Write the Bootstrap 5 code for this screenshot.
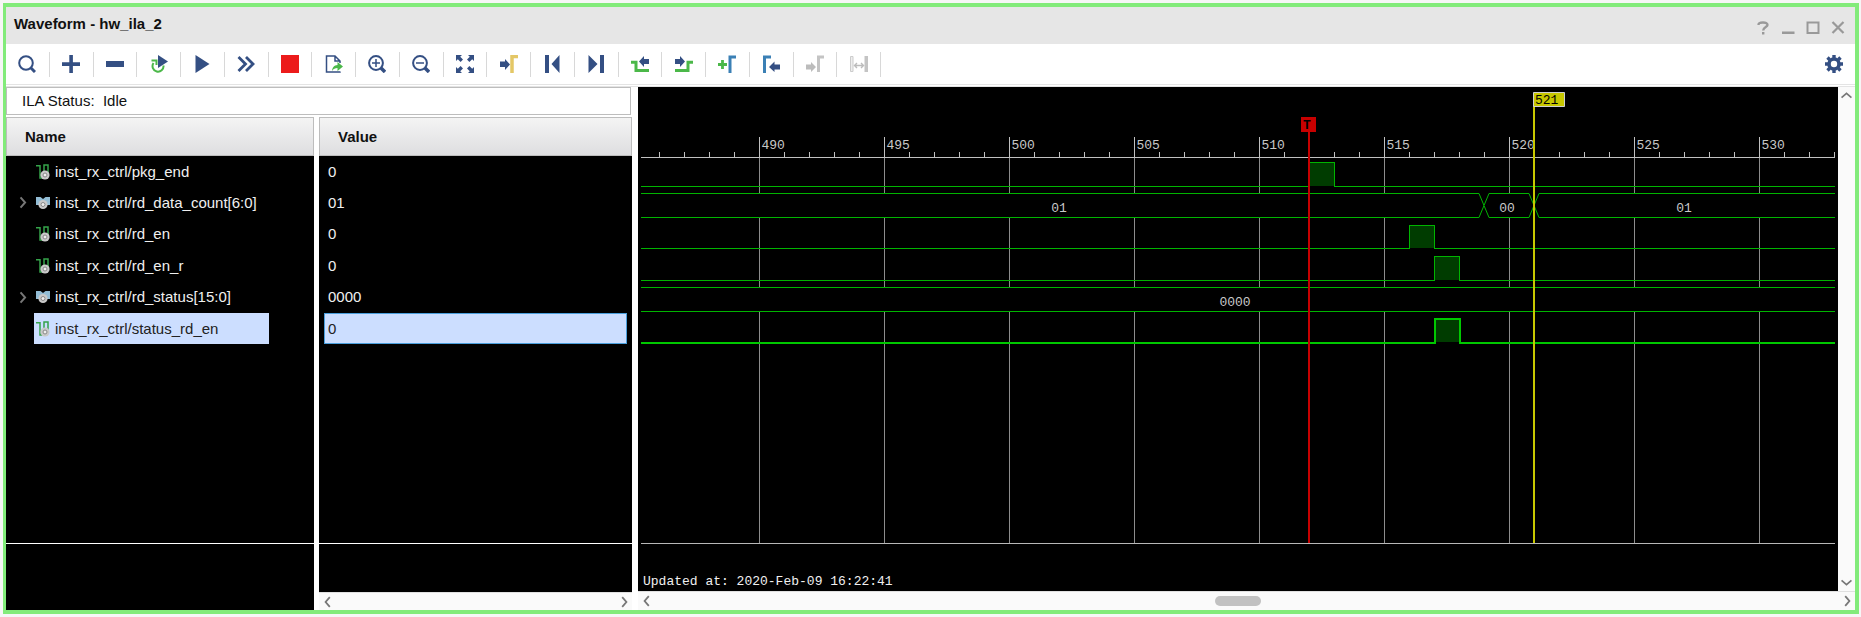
<!DOCTYPE html>
<html lang="en">
<head>
<meta charset="utf-8">
<meta name="viewport" content="width=device-width, initial-scale=1">
<title>Waveform - hw_ila_2</title>
<link href="https://cdn.jsdelivr.net/npm/bootstrap@5.3.0/dist/css/bootstrap.min.css" rel="stylesheet">
<style>
  :root { --navy: #344f83; --frame: #82eb7a; --leaf: #4bb849; }
  body { font-family: "Liberation Sans", Arial, sans-serif; font-size: 15px; line-height: 20px; color: #111; background: #f6f6f6; }
  .wave-window { margin: 3px 2px 3px 3px; border: 4px solid var(--frame); border-left-width: 3px; background: #fff; }
  .title-strip { height: 37px; background: #e6e6e6; padding: 0 5px 4px 8px; }
  .title-strip h1 { font-size: 15px; line-height: 20px; font-weight: 700; }
  .plain-btn { border: 0; padding: 0; background: none; display: flex; align-items: center; justify-content: center; }
  .plain-btn svg { display: block; }
  .win-btn { width: 25px; height: 20px; }
  .tool-strip { height: 43px; border-bottom: 3px solid #e4e4e4; border-bottom-style: double; }
  .tool-grid { display: grid; grid-template-columns: repeat(20, 1fr); width: 875px; height: 25px; }
  .tool-grid .plain-btn { border-right: 1px solid #d8d8d8; }
  .panes { display: grid; grid-template-columns: minmax(0, 626fr) minmax(0, 1217fr); gap: 6px; }
  .lists { display: grid; grid-template-columns: minmax(0, 308fr) minmax(0, 313fr); gap: 5px; }
  .status-line { height: 28px; border: 1px solid #bdbdbd; padding: 0 15px; margin: 0 1px 2px 0; }
  .black-pane { background: #000; color: #f0f0f0; }
  .sig-table { width: 100%; border-collapse: separate; border-spacing: 0; table-layout: fixed; }
  .sig-table th { height: 39px; padding: 0 18px; color: #111; background: linear-gradient(#f4f4f4, #dedee0); border: 1px solid #bdbdbd; font-weight: 700; }
  .sig-table td { height: 31px; padding: 0; white-space: nowrap; }
  .sig-table tr:nth-child(3) td, .sig-table tr:nth-child(5) td { height: 32px; }
  .twist { width: 28px; height: 31px; flex: none; }
  .sig-name { height: 31px; padding: 0 2px; gap: 5px; }
  .sig-name svg { flex: none; }
  .sig-value { height: 31px; margin: 0 5px; padding: 0 3px; display: flex; align-items: center; border: 1px solid transparent; }
  .picked { background: #ccdeff; color: #222; }
  .sig-name.picked { width: 235px; }
  .sig-value.picked { border-color: #4a9fdc; }
  .foot { border-top: 1px solid #fff; }
  .foot-name { height: 67px; }
  .foot-value { height: 49px; }
  .foot-wave { height: 48px; border-color: #b8b8b8; margin: 0 3px; padding: 30px 2px 0; }
  .bar-x { height: 18px; background: #fafafa; border-top: 1px solid #e0e0e0; }
  .bar-x .plain-btn, .bar-y .plain-btn { width: 17px; height: 17px; }
  .bar-y { background: #fafafa; width: 17px; }
  .bar-x.wide { height: 19px; }
  .thumb-track { display: grid; grid-template-columns: 560fr 46px 577fr; align-items: center; }
  .thumb { height: 10px; border-radius: 5px; background: #c1c1c1; }
  .plot-wrap { padding: 0 3px; min-height: 260px; }
  .plot { width: 100%; flex: 1 1 0; min-height: 0; display: block; overflow: hidden; }
  .mono, .plot text { font-family: "Liberation Mono", "Courier New", monospace; font-size: 13px; line-height: 16px; }
  .plot text { fill: #c8c8c8; }
  .plot .axis { stroke: #c0c0c0; }
  .plot .gridline { stroke: #8c8c8c; }
  .plot .trace { stroke: #00b400; fill: none; }
  .plot .trace.chosen { stroke: #00c800; stroke-width: 2; }
  .plot .high { fill: #003c00; }
  .plot .bus { fill: #000; }
  .plot .flag-text { fill: #000; }
</style>
</head>
<body class="vh-100 d-flex flex-column">

<svg class="d-none" aria-hidden="true">
  <symbol id="bit" viewBox="0 0 14 16">
    <path d="M0 1.800H4V14H6.500M8 9V1h4v8" fill="none" stroke="#35a34a" stroke-width="1.500"/>
    <circle cx="9" cy="11" r="4.600" fill="#c9c9c9"/><circle cx="9" cy="11" r="2" fill="#eee" stroke="#888" stroke-width="1"/>
  </symbol>
  <symbol id="bus" viewBox="0 0 14 16">
    <path d="M0 2h4.500L7 4l2.500-2H14v8h-3L7 8l-4 2H0z" fill="#93bdd5"/>
    <circle cx="7" cy="9.500" r="4.600" fill="#c9c9c9"/><circle cx="7" cy="9.500" r="2" fill="#eee" stroke="#888" stroke-width="1"/>
  </symbol>
  <symbol id="left" viewBox="0 0 10 10"><path d="M6.500 1 3 5l3.500 4" fill="none" stroke="#777" stroke-width="1.500"/></symbol>
  <symbol id="right" viewBox="0 0 10 10"><path d="M3.500 1 7 5 3.500 9" fill="none" stroke="#777" stroke-width="1.500"/></symbol>
  <symbol id="up" viewBox="0 0 10 10"><path d="M.500 7 5 3l4.500 4" fill="none" stroke="#777" stroke-width="1.500"/></symbol>
  <symbol id="down" viewBox="0 0 10 10"><path d="M.500 3 5 7l4.500-4" fill="none" stroke="#777" stroke-width="1.500"/></symbol>
</svg>

<main class="wave-window d-flex flex-column flex-grow-1">
  <header class="title-strip d-flex align-items-center justify-content-between">
    <h1 class="m-0">Waveform - hw_ila_2</h1>
    <div class="d-flex pt-2">
      <button class="plain-btn win-btn" aria-label="Help"><svg width="14" height="14" fill="none" stroke="#999" stroke-width="2.400"><path d="M2.500 4C2.500 2 4.500 1.500 7 1.500s4.500.500 4.500 2.500S7.200 6.200 7.200 9.500M7.200 11v2.500"/></svg></button>
      <button class="plain-btn win-btn" aria-label="Minimize"><svg width="14" height="14"><path d="M1 10.500h12.500V13H1z" fill="#999"/></svg></button>
      <button class="plain-btn win-btn" aria-label="Maximize"><svg width="14" height="14"><path d="M1.500 1.500h11v10.500h-11z" fill="none" stroke="#999" stroke-width="2"/></svg></button>
      <button class="plain-btn win-btn" aria-label="Close"><svg width="14" height="14"><path d="M1.500 1l11 11m0-11l-11 11" stroke="#999" stroke-width="2.200"/></svg></button>
    </div>
  </header>

  <div class="tool-strip d-flex align-items-center justify-content-between pe-2" role="toolbar" aria-label="Waveform tools">
    <div class="tool-grid">
      <button class="plain-btn" aria-label="Search"><svg width="18" height="18" fill="none" stroke="#344f83"><circle cx="8" cy="8" r="6.800" stroke-width="2"/><path d="M13 13l4 4" stroke-width="3"/></svg></button>
      <button class="plain-btn" aria-label="Add"><svg width="18" height="18"><path d="M7.300 0h3.600v7.300H18v3.600h-7.100V18H7.300v-7.100H0V7.300h7.300z" fill="#344f83"/></svg></button>
      <button class="plain-btn" aria-label="Remove"><svg width="18" height="18"><path d="M0 6h18v6H0z" fill="#344f83"/></svg></button>
      <button class="plain-btn" aria-label="Auto re-trigger"><svg width="18" height="18"><path d="M1.500 5.500h5v4.500M3.500 8a5.500 5.500 0 1 0 10 2.500" fill="none" stroke="#4bb849" stroke-width="2"/><path d="M8 0l10 6.500L8 13z" fill="#344f83"/></svg></button>
      <button class="plain-btn" aria-label="Run trigger"><svg width="18" height="18"><path d="M2.500 0 16.500 9l-14 9z" fill="#344f83"/></svg></button>
      <button class="plain-btn" aria-label="Run immediate"><svg width="18" height="18"><path d="M1.500 2l7 7-7 7M9 2l7 7-7 7" fill="none" stroke="#344f83" stroke-width="2.800"/></svg></button>
      <button class="plain-btn" aria-label="Stop"><svg width="18" height="18"><path d="M0 0h18v18H0z" fill="#ec1b1b"/></svg></button>
      <button class="plain-btn" aria-label="Export"><svg width="18" height="18"><path d="M15 16.500V17H1.500V1H10l5 5v2M10 1v5h5" fill="none" stroke="#344f83" stroke-width="1.500"/><path d="M7 16c.500-4 2-5.500 5.500-6V7l5.500 4.500-5.500 4.500v-3c-2.500 0-4 .800-5.500 3z" fill="#4bb849"/></svg></button>
      <button class="plain-btn" aria-label="Zoom in"><svg width="18" height="18" fill="none" stroke="#344f83"><circle cx="8" cy="8" r="6.900" stroke-width="2"/><path d="M13 13l4 4" stroke-width="3.500"/><path d="M4 8h8M8 4v8" stroke-width="1.500"/></svg></button>
      <button class="plain-btn" aria-label="Zoom out"><svg width="18" height="18" fill="none" stroke="#344f83"><circle cx="8" cy="8" r="6.900" stroke-width="2"/><path d="M13 13l4 4" stroke-width="3.500"/><path d="M4 8h8" stroke-width="1.500"/></svg></button>
      <button class="plain-btn" aria-label="Zoom fit"><svg width="18" height="18"><path d="M0 0h6L4.200 1.800 7 4.600 4.600 7 1.800 4.200 0 6zM18 0v6l-1.800-1.800L13.400 7 11 4.600l2.800-2.800L12 0zM0 18v-6l1.800 1.800L4.600 11 7 13.400l-2.800 2.800L6 18zM18 18h-6l1.800-1.800L11 13.400l2.400-2.400 2.800 2.800L18 12z" fill="#344f83"/></svg></button>
      <button class="plain-btn" aria-label="Go to cursor"><svg width="18" height="18"><path d="M0 6.500h5V4l5 5.500L5 15v-3H0z" fill="#344f83"/><path d="M12 18V1.500h6" fill="none" stroke="#e4c766" stroke-width="3.500"/></svg></button>
      <button class="plain-btn" aria-label="Go to start"><svg width="18" height="18"><path d="M2 0h4v18H2zM16.500 0v18L8.500 9z" fill="#344f83"/></svg></button>
      <button class="plain-btn" aria-label="Go to end"><svg width="18" height="18"><path d="M13 0h4v18h-4zM1.500 0v18l9-9z" fill="#344f83"/></svg></button>
      <button class="plain-btn" aria-label="Previous transition"><svg width="18" height="18"><path d="M0 7.200h5v8.300h13" fill="none" stroke="#4bb849" stroke-width="3"/><path d="M8 6.500 13 1v3h5v5h-5v3z" fill="#344f83"/></svg></button>
      <button class="plain-btn" aria-label="Next transition"><svg width="18" height="18"><path d="M18 7.200h-5v8.300H0" fill="none" stroke="#4bb849" stroke-width="3"/><path d="M10 6.500 5 1v3H0v5h5v3z" fill="#344f83"/></svg></button>
      <button class="plain-btn" aria-label="Add marker"><svg width="18" height="18"><path d="M0 9.500h9M4.500 5v9" stroke="#4bb849" stroke-width="2.800"/><path d="M12 18V2h6" fill="none" stroke="#3b80b5" stroke-width="3"/></svg></button>
      <button class="plain-btn" aria-label="Previous marker"><svg width="18" height="18"><path d="M2.500 18V2H9" fill="none" stroke="#3b80b5" stroke-width="3"/><path d="M7 12l5.500-5.500V9.500H18v5h-5.500V17z" fill="#344f83"/></svg></button>
      <button class="plain-btn" aria-label="Next marker" aria-disabled="true"><svg width="18" height="18"><path d="M0 9.500h5V7l5 5-5 5v-2.500H0z" fill="#bcbcbc"/><path d="M12.500 17V2H18" fill="none" stroke="#c4c4c4" stroke-width="3"/></svg></button>
      <button class="plain-btn" aria-label="Swap cursors" aria-disabled="true"><svg width="18" height="18"><path d="M.500 1.500h2.500v15H.500z" fill="#eee" stroke="#ccc"/><path d="M14.500 1H18v16h-3.500z" fill="#c4c4c4"/><path d="M5 10.500h8M7 8l-2.500 2.500L7 13m4-5l2.500 2.500L11 13" fill="none" stroke="#bcbcbc" stroke-width="1.400"/></svg></button>
    </div>
    <button class="plain-btn me-1" aria-label="Settings"><svg width="18" height="18" fill="none" stroke="#344f83"><circle cx="9" cy="9" r="5" stroke-width="3.600"/><path d="M9 0v3M9 15v3M0 9h3M15 9h3M2.500 2.500l2.200 2.200M13.300 13.300l2.200 2.200M2.500 15.500l2.200-2.200M13.300 4.700l2.200-2.200" stroke-width="3.400"/></svg></button>
  </div>

  <div class="panes flex-grow-1">
    <section class="d-flex flex-column">
      <div class="status-line d-flex align-items-center">ILA Status:&nbsp; Idle</div>
      <div class="lists flex-grow-1">
        <div class="black-pane d-flex flex-column">
          <table class="sig-table">
            <thead><tr><th scope="col">Name</th></tr></thead>
            <tbody>
              <tr><td><div class="d-flex"><span class="twist"></span><span class="sig-name d-flex align-items-center"><svg width="14" height="16"><use href="#bit"/></svg>inst_rx_ctrl/pkg_end</span></div></td></tr>
              <tr><td><div class="d-flex"><button class="plain-btn twist ps-1" aria-label="Expand rd_data_count"><svg width="13" height="13"><use href="#right"/></svg></button><span class="sig-name d-flex align-items-center"><svg width="14" height="16"><use href="#bus"/></svg>inst_rx_ctrl/rd_data_count[6:0]</span></div></td></tr>
              <tr><td><div class="d-flex"><span class="twist"></span><span class="sig-name d-flex align-items-center"><svg width="14" height="16"><use href="#bit"/></svg>inst_rx_ctrl/rd_en</span></div></td></tr>
              <tr><td><div class="d-flex"><span class="twist"></span><span class="sig-name d-flex align-items-center"><svg width="14" height="16"><use href="#bit"/></svg>inst_rx_ctrl/rd_en_r</span></div></td></tr>
              <tr><td><div class="d-flex"><button class="plain-btn twist ps-1" aria-label="Expand rd_status"><svg width="13" height="13"><use href="#right"/></svg></button><span class="sig-name d-flex align-items-center"><svg width="14" height="16"><use href="#bus"/></svg>inst_rx_ctrl/rd_status[15:0]</span></div></td></tr>
              <tr><td><div class="d-flex"><span class="twist"></span><span class="sig-name picked d-flex align-items-center"><svg width="14" height="16"><use href="#bit"/></svg>inst_rx_ctrl/status_rd_en</span></div></td></tr>
            </tbody>
          </table>
          <div class="foot foot-name mt-auto"></div>
        </div>
        <div class="black-pane d-flex flex-column">
          <table class="sig-table">
            <thead><tr><th scope="col">Value</th></tr></thead>
            <tbody>
              <tr><td><div class="sig-value">0</div></td></tr>
              <tr><td><div class="sig-value">01</div></td></tr>
              <tr><td><div class="sig-value">0</div></td></tr>
              <tr><td><div class="sig-value">0</div></td></tr>
              <tr><td><div class="sig-value">0000</div></td></tr>
              <tr><td><div class="sig-value picked">0</div></td></tr>
            </tbody>
          </table>
          <div class="foot foot-value mt-auto"></div>
          <div class="bar-x d-flex justify-content-between">
            <button class="plain-btn" aria-label="Scroll values left"><svg width="12" height="12"><use href="#left"/></svg></button>
            <button class="plain-btn" aria-label="Scroll values right"><svg width="12" height="12"><use href="#right"/></svg></button>
          </div>
        </div>
      </div>
    </section>

    <section class="d-flex flex-column">
      <div class="d-flex flex-grow-1">
        <div class="black-pane d-flex flex-column flex-grow-1">
          <div class="plot-wrap d-flex flex-column flex-grow-1"><svg class="plot" id="plot" role="img" aria-label="Signal traces"></svg></div>
          <div class="foot foot-wave mono">Updated at: 2020-Feb-09 16:22:41</div>
        </div>
        <div class="bar-y d-flex flex-column justify-content-between">
          <button class="plain-btn" aria-label="Scroll up"><svg width="11" height="11"><use href="#up"/></svg></button>
          <button class="plain-btn" aria-label="Scroll down"><svg width="11" height="11"><use href="#down"/></svg></button>
        </div>
      </div>
      <div class="bar-x wide d-flex">
        <button class="plain-btn" aria-label="Scroll waves left"><svg width="12" height="12"><use href="#left"/></svg></button>
        <div class="thumb-track flex-grow-1"><span></span><span class="thumb"></span><span></span></div>
        <button class="plain-btn" aria-label="Scroll waves right"><svg width="12" height="12"><use href="#right"/></svg></button>
      </div>
    </section>
  </div>
</main>

<script src="https://cdn.jsdelivr.net/npm/bootstrap@5.3.0/dist/js/bootstrap.bundle.min.js"></script>
<script>
  // 25 px per sample; sample 490 sits 118 px from the left edge of the plot
  const plot = document.getElementById('plot');
  const X = t => (t - 490) * 25 + 118;
  const line = (cls, x1, y1, x2, y2) =>
    `<path class="${cls}" d="M${x1} ${y1}L${x2} ${y2}" shape-rendering="crispEdges"/>`;
  const label = (x, y, s, anchor = 'start') => `<text x="${x}" y="${y}" text-anchor="${anchor}">${s}</text>`;

  function draw() {
    const { width, height } = plot.getBoundingClientRect();
    let out = '';

    // time axis; a label is drawn only where it fits whole
    for (let t = 486; X(t) < width; t++) {
      const x = X(t) + .5;
      if (t % 5) { out += line('axis', x, 65, x, 70); continue; }
      out += line('gridline', x, 70, x, height) + line('axis', x, 50, x, 70);
      if (x + 28 < width) out += label(x + 2, 62, t);
    }
    out += line('axis', 0, 70.5, width, 70.5);

    // single-bit signals: low everywhere except one pulse
    const bit = (top, base, a, b, cls = '') => {
      out += `<path class="high" d="M${X(a)} ${top}H${X(b)}V${base}H${X(a)}z"/>`;
      out += `<path class="trace ${cls}" shape-rendering="crispEdges" d="M0 ${base + .5}H${X(a) + .5}V${top + .5}H${X(b) + .5}V${base + .5}H${width}"/>`;
    };
    // buses: one box per value, with a crossing at every change
    const bus = (top, base, changes) => {
      const y1 = top + .5, y2 = base + .5, ym = (y1 + y2) / 2;
      let x = -20;
      [...changes.map(X), width + 20].forEach(next => {
        out += `<path class="trace bus" d="M${x} ${ym}L${x + 5} ${y1}H${next - 5}L${next} ${ym}L${next - 5} ${y2}H${x + 5}z"/>`;
        x = next;
      });
    };
    bit(75, 99, 512, 513);
    bus(106, 130, [519, 521]);
    bit(138, 161, 516, 517);
    bit(169, 193, 517, 518);
    bus(200, 224, []);
    bit(231, 255, 517, 518, 'chosen');
    out += label(418, 125, '01', 'middle') + label(866, 125, '00', 'middle')
         + label(1043, 125, '01', 'middle') + label(594, 219, '0000', 'middle');

    // trigger marker and cursor
    const tx = X(512), cx = X(521);
    out += `<path d="M${tx - 8} 30h15v15h-15z" fill="#c80000"/><path d="M${tx - 1} 45h2V${height}h-2z" fill="#c80000"/>`
         + `<text class="flag-text fw-bold" x="${tx - 6}" y="42">T</text>`
         + `<path d="M${cx - 1} 12h2V${height}h-2z" fill="#c8c800"/>`
         + `<path d="M${cx - .5} 5.5h31v14h-31z" fill="#c8c800" stroke="#d0d0d0"/>`
         + `<text class="flag-text" x="${cx + 1}" y="17">521</text>`;
    plot.innerHTML = out;
  }
  draw();
  window.addEventListener('resize', draw);
</script>
</body>
</html>
